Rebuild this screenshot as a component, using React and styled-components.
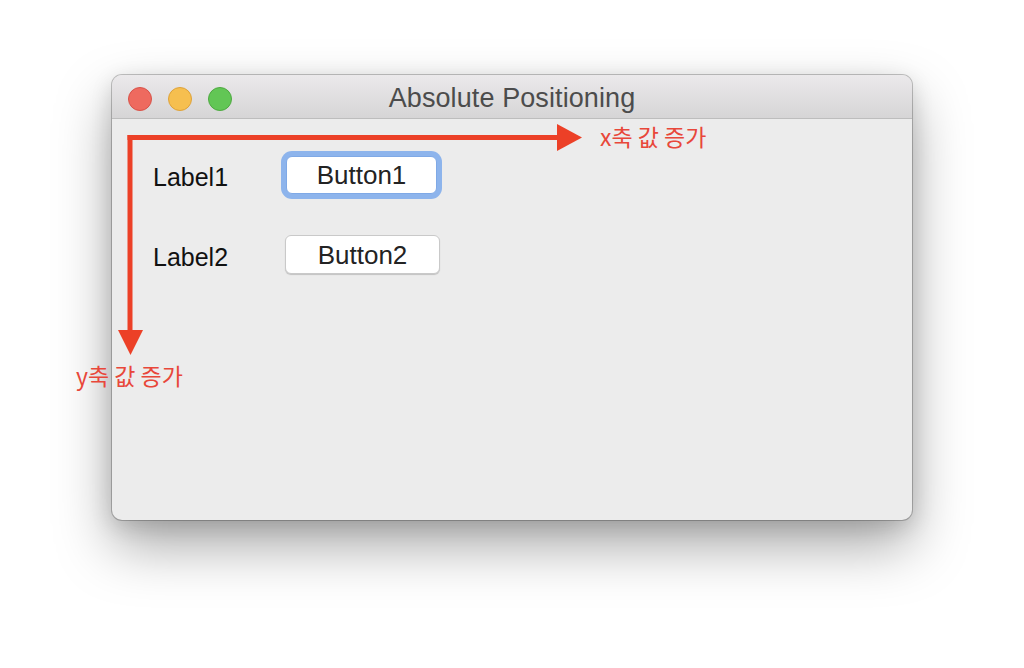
import React from "react";
import styled, { createGlobalStyle } from "styled-components";

const Global = createGlobalStyle`
  html, body { margin: 0; padding: 0; background: #ffffff; }
  body { font-family: "Liberation Sans", Arial, sans-serif; }
`;

const Page = styled.div`
  position: relative;
  width: 1024px;
  height: 668px;
  overflow: hidden;
  background: #ffffff;
  padding: 75px 0 0 112px;
  box-sizing: border-box;
`;

const Window = styled.div`
  width: 800px;
  height: 445px;
  border-radius: 10px;
  background: #ececec;
  box-shadow: 0 0 0 1px rgba(0, 0, 0, 0.22), 0 26px 56px rgba(0, 0, 0, 0.34),
    0 6px 22px rgba(0, 0, 0, 0.14);
  display: flex;
  flex-direction: column;
  overflow: hidden;
`;

const TitleBar = styled.div`
  position: relative;
  height: 44px;
  flex: none;
  box-sizing: border-box;
  padding-top: 4px;
  background: linear-gradient(#ebe9eb, #d6d5d6);
  border-bottom: 1px solid #bdbdbd;
  display: flex;
  align-items: center;
  justify-content: center;
`;

const Lights = styled.div`
  position: absolute;
  left: 16px;
  top: 12px;
  display: flex;
  gap: 16px;
`;

const Light = styled.span`
  width: 22px;
  height: 22px;
  border-radius: 50%;
  background: ${(p) => p.$fill};
  border: 1px solid ${(p) => p.$edge};
`;

const Title = styled.div`
  font-size: 27px;
  color: #4c4c4c;
  letter-spacing: 0.1px;
`;

const Content = styled.div`
  flex: 1;
  padding: 37px 0 0 41px;
  display: grid;
  grid-template-columns: 132px auto;
  grid-template-rows: 38px 39px;
  row-gap: 41px;
  align-content: start;
  justify-content: start;
  align-items: center;
`;

const Label = styled.div`
  font-size: 25px;
  line-height: 30px;
  color: #111111;
  margin-top: ${(p) => p.$shift || 0}px;
`;

const Button = styled.button`
  box-sizing: border-box;
  width: ${(p) => (p.$focused ? 151 : 155)}px;
  height: ${(p) => (p.$focused ? 38 : 39)}px;
  margin-left: ${(p) => (p.$focused ? 1 : 0)}px;
  background: #ffffff;
  border-radius: 6px;
  border: 1px solid ${(p) => (p.$focused ? "#7fa9e6" : "#c9c9c9")};
  box-shadow: ${(p) =>
    p.$focused
      ? "0 0 0 5px #8db4ec"
      : "0 1px 1px rgba(0,0,0,0.18)"};
  font-family: "Liberation Sans", Arial, sans-serif;
  font-size: 26px;
  color: #232323;
  padding: 1px 0 0;
  display: flex;
  align-items: center;
  justify-content: center;
`;

const Annotation = styled.svg`
  position: absolute;
  left: 0;
  top: 0;
  width: 1024px;
  height: 668px;
  pointer-events: none;
`;

const Note = styled.div`
  position: absolute;
  left: ${(p) => p.$x}px;
  top: ${(p) => p.$y}px;
  font-family: "Noto Sans CJK KR", "Noto Sans", sans-serif;
  font-size: 23px;
  line-height: 28px;
  color: #e8473a;
  white-space: nowrap;
`;

const RED = "#ec4027";

export default function App() {
  return (
    <>
      <Global />
      <Page>
        <Window>
          <TitleBar>
            <Lights>
              <Light $fill="#ee6a5f" $edge="#d85249" />
              <Light $fill="#f6bf4f" $edge="#dea23a" />
              <Light $fill="#62c655" $edge="#4ea941" />
            </Lights>
            <Title>Absolute Positioning</Title>
          </TitleBar>
          <Content>
            <Label $shift={4}>Label1</Label>
            <Button $focused>Button1</Button>
            <Label $shift={5}>Label2</Label>
            <Button>Button2</Button>
          </Content>
        </Window>
        <Annotation viewBox="0 0 1024 668">
          <rect x="127.5" y="135" width="432" height="5" fill={RED} />
          <polygon points="557,124 582,137.5 557,151" fill={RED} />
          <rect x="127.5" y="135" width="5" height="197" fill={RED} />
          <polygon points="118,330 143,330 130.5,355" fill={RED} />
        </Annotation>
        <Note $x={600} $y={122}>x축 값 증가</Note>
        <Note $x={76} $y={361}>y축 값 증가</Note>
      </Page>
    </>
  );
}
